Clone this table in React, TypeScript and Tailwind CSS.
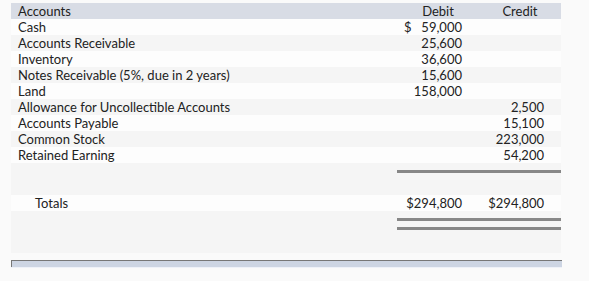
const rows: { name: string; debit?: string; credit?: string; dollar?: boolean }[] = [
  { name: "Cash", debit: "59,000", dollar: true },
  { name: "Accounts Receivable", debit: "25,600" },
  { name: "Inventory", debit: "36,600" },
  { name: "Notes Receivable (5%, due in 2 years)", debit: "15,600" },
  { name: "Land", debit: "158,000" },
  { name: "Allowance for Uncollectible Accounts", credit: "2,500" },
  { name: "Accounts Payable", credit: "15,100" },
  { name: "Common Stock", credit: "223,000" },
  { name: "Retained Earning", credit: "54,200" },
];

export default function App() {
  return (
    <div
      className="min-h-screen bg-[#fafafa] pl-[11px] pt-[3px] text-[13px] text-[#222]"
      style={{ fontFamily: "Lato, 'Open Sans', sans-serif" }}
    >
      <div className="w-[550px]">
        {/* header */}
        <div className="grid h-4 grid-cols-[386px_82px_82px] bg-[#d8dce5] leading-4">
          <div className="pl-[7px]">Accounts</div>
          <div className="text-center">Debit</div>
          <div className="text-center">Credit</div>
        </div>

        {rows.map((r, i) => (
          <div
            key={r.name}
            className={`grid h-4 grid-cols-[386px_82px_82px] leading-4 ${i % 2 === 0 ? "bg-[#fdfdfd]" : "bg-[#f5f5f5]"}`}
          >
            <div className="pl-[7px]">{r.name}</div>
            <div className="flex justify-between pl-[7px] pr-[17px]">
              <span>{r.dollar ? "$" : ""}</span>
              <span>{r.debit}</span>
            </div>
            <div className="pr-[17px] text-right">{r.credit}</div>
          </div>
        ))}

        {/* single rule */}
        <div className="grid h-8 grid-cols-[386px_164px] bg-[#f5f5f5]">
          <div />
          <div className="mt-[7px] h-[3px] bg-[#878787]" />
        </div>

        {/* totals */}
        <div className="grid h-4 grid-cols-[386px_82px_82px] bg-[#fdfdfd] leading-4">
          <div className="pl-6">Totals</div>
          <div className="pr-[17px] text-right">$294,800</div>
          <div className="pr-[17px] text-right">$294,800</div>
        </div>

        {/* double rule */}
        <div className="grid h-[42px] grid-cols-[386px_164px] bg-[#f5f5f5]">
          <div />
          <div className="flex flex-col gap-[6px] pt-[7px]">
            <div className="h-[3px] bg-[#878787]" />
            <div className="h-[3px] bg-[#878787]" />
          </div>
        </div>
      </div>

      {/* bottom bar */}
      <div className="mt-[7px] h-[7px] w-[551px] border-l border-t border-[#777] bg-[#cdd5e3] shadow-[0_1px_0_#eef1f8]" />
    </div>
  );
}
